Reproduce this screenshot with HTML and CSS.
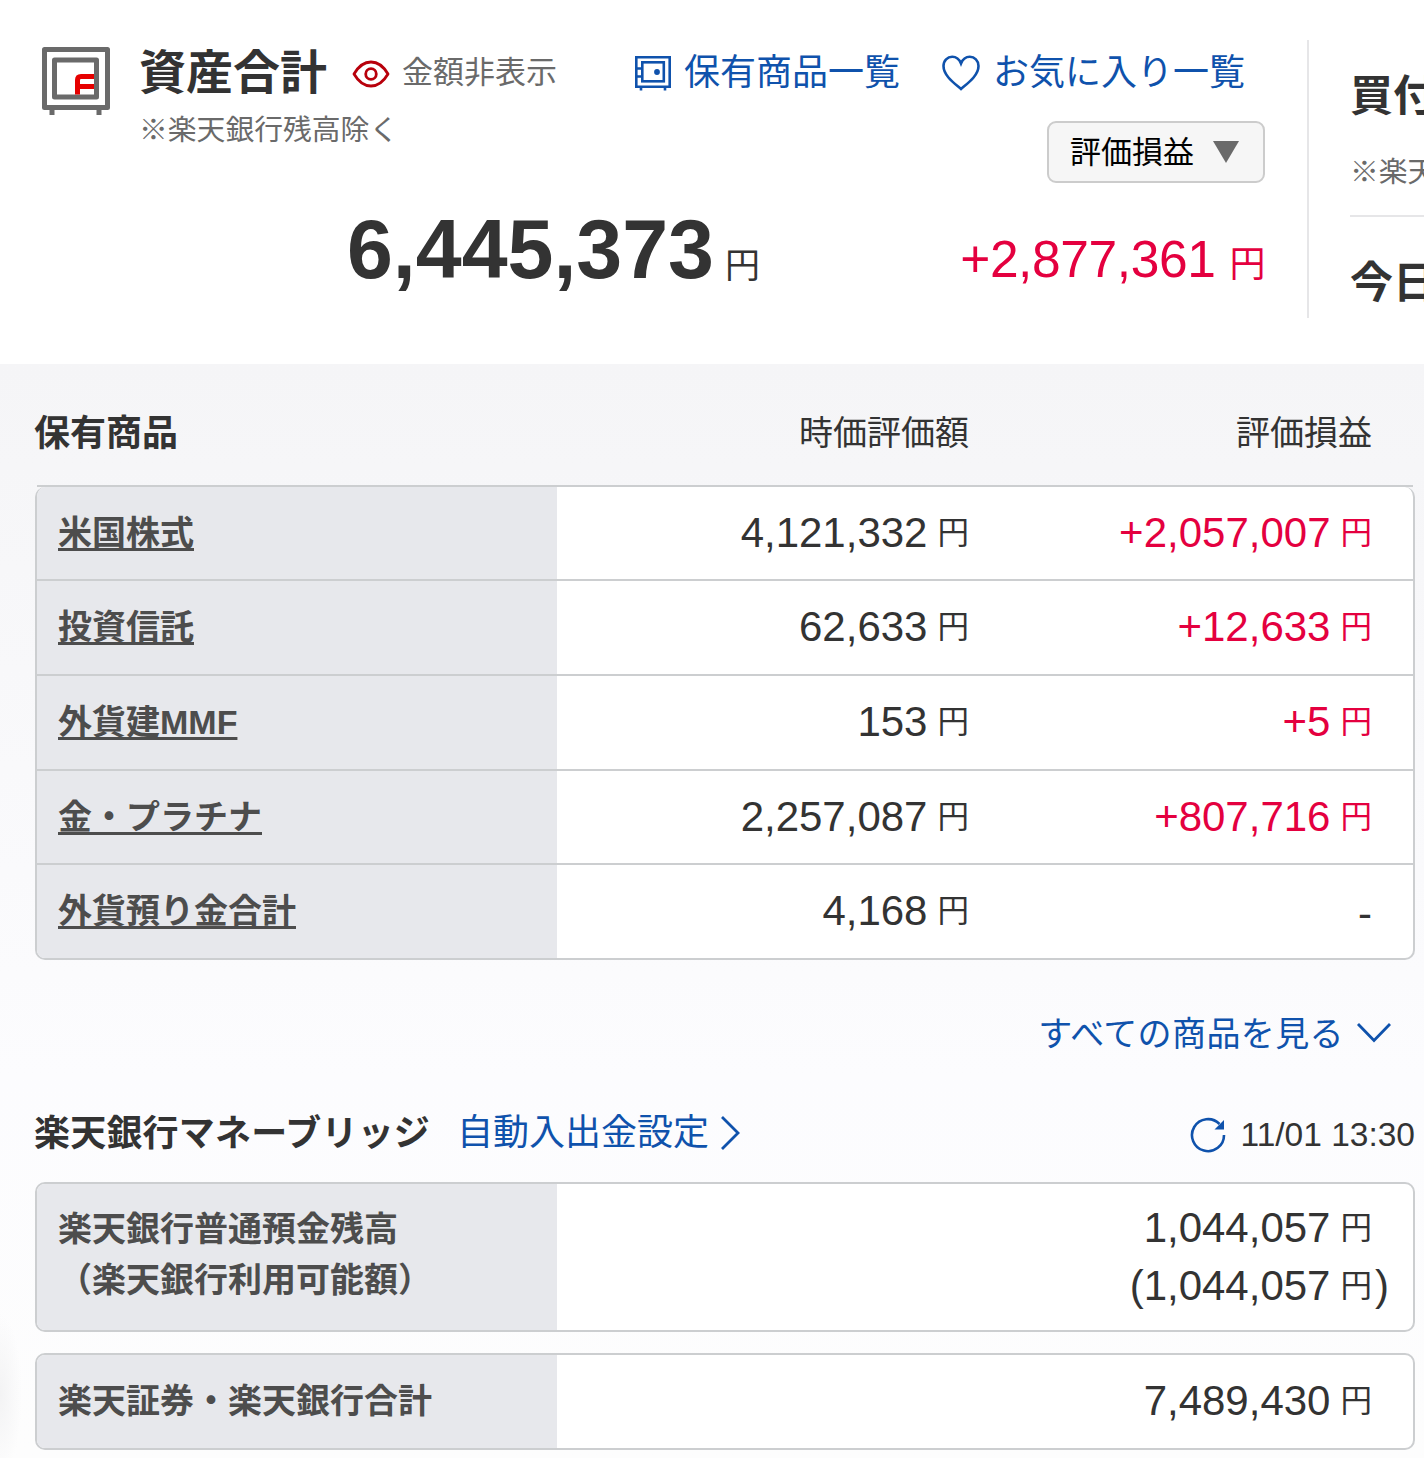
FILE: index.html
```html
<!DOCTYPE html>
<html lang="ja">
<head>
    <meta charset="UTF-8">
    <meta name="viewport" content="width=device-width, initial-scale=1.0">
    <title>資産合計</title>
    <link rel="stylesheet" href="styles.css">
</head>
<body>
    <header class="summary">
        <svg class="safe-icon" width="68" height="68" viewBox="0 0 68 68">
            <rect x="2.5" y="2.5" width="63" height="58" fill="none" stroke="#6a6a6a" stroke-width="5" stroke-linejoin="round"/>
            <rect x="12.5" y="13" width="42" height="37" fill="none" stroke="#6a6a6a" stroke-width="5" stroke-linejoin="round"/>
            <path d="M10 62v6M57 62v6" stroke="#6a6a6a" stroke-width="5"/>
            <path d="M35.500 47.500V33Q35.500 29.500 39 29.500H52M35.500 39.500H52" fill="none" stroke="#e60000" stroke-width="5"/>
        </svg>
        <div class="total">
            <div class="title-row">
                <h1>資産合計</h1>
                <svg class="eye-icon" width="38" height="28" viewBox="0 0 38 28">
                    <path d="M2 14Q9 2 19 2T36 14Q29 26 19 26T2 14Z" fill="none" stroke="#b8000b" stroke-width="2.800" stroke-linejoin="round"/>
                    <circle cx="19" cy="14" r="5.300" fill="none" stroke="#b8000b" stroke-width="2.800"/>
                </svg>
                <span class="hide-amount">金額非表示</span>
            </div>
            <p class="note">※楽天銀行残高除く</p>
            <p class="total-amount">6,445,373<span class="yen">円</span></p>
        </div>
        <div class="profit">
            <nav class="links">
                <a>
                    <svg width="36" height="36" viewBox="0 0 36 36" fill="none" stroke="#0f52ac" stroke-width="2.600">
                        <path d="M1.300 2.300H34.700V31.700H1.300ZM6 31v4.500M30 31v4.500"/>
                        <rect x="7.300" y="7.300" width="21.500" height="19"/>
                        <path d="M2 13.500h5M2 21.500h5"/>
                        <circle cx="22" cy="17" r="1.600" fill="#0f52ac"/>
                    </svg>
                    <span>保有商品一覧</span>
                </a>
                <a>
                    <svg width="38" height="36" viewBox="0 0 38 36" fill="none" stroke="#0f52ac" stroke-width="2.600">
                        <path d="M19 34C12 28 1.500 20.500 1.500 11C1.500 5.500 5.500 1.800 10.200 1.800C14.200 1.800 17.500 4.800 19 8.500C20.500 4.800 23.800 1.800 27.800 1.800C32.500 1.800 36.500 5.500 36.500 11C36.500 20.500 26 28 19 34Z"/>
                    </svg>
                    <span>お気に入り一覧</span>
                </a>
            </nav>
            <button class="select">評価損益<span class="arrow"></span></button>
            <p class="profit-amount">+2,877,361<span class="yen">円</span></p>
        </div>
        <aside class="side">
            <h2>買付</h2>
            <p>※楽天</p>
            <h2 class="today">今日</h2>
        </aside>
    </header>

    <main class="content">
        <div class="row head">
            <h2>保有商品</h2>
            <span class="value">時価評価額</span>
            <span class="value">評価損益</span>
        </div>
        <div class="table">
            <div class="row">
                <a class="label">米国株式</a>
                <span class="value">4,121,332<span class="yen">円</span></span>
                <span class="value plus">+2,057,007<span class="yen">円</span></span>
            </div>
            <div class="row tall">
                <a class="label">投資信託</a>
                <span class="value">62,633<span class="yen">円</span></span>
                <span class="value plus">+12,633<span class="yen">円</span></span>
            </div>
            <div class="row tall">
                <a class="label">外貨建MMF</a>
                <span class="value">153<span class="yen">円</span></span>
                <span class="value plus">+5<span class="yen">円</span></span>
            </div>
            <div class="row">
                <a class="label">金・プラチナ</a>
                <span class="value">2,257,087<span class="yen">円</span></span>
                <span class="value plus">+807,716<span class="yen">円</span></span>
            </div>
            <div class="row">
                <a class="label">外貨預り金合計</a>
                <span class="value">4,168<span class="yen">円</span></span>
                <span class="value none">-</span>
            </div>
        </div>

        <a class="show-all">
            <span>すべての商品を見る</span>
            <svg width="36" height="22" viewBox="0 0 36 22">
                <path d="M2 2L18 18.500L34 2" fill="none" stroke="#0f52ac" stroke-width="2.800"/>
            </svg>
        </a>

        <div class="bridge-head">
            <h2>楽天銀行マネーブリッジ</h2>
            <a class="setting">自動入出金設定</a>
            <svg class="next" width="22" height="36" viewBox="0 0 22 36">
                <path d="M3 2L19 18L3 34" fill="none" stroke="#0f52ac" stroke-width="2.800"/>
            </svg>
            <svg class="reload" width="36" height="36" viewBox="0 0 36 36">
                <path d="M34 18A16 16 0 1 1 29.500 7" fill="none" stroke="#0f52ac" stroke-width="2.600"/>
                <path d="M34 3V12.500H24.500Z" fill="#0f52ac"/>
            </svg>
            <span class="time">11/01 13:30</span>
        </div>

        <div class="table bank">
            <div class="bank-label">楽天銀行普通預金残高<br>（楽天銀行利用可能額）</div>
            <div class="bank-value">
                <div>1,044,057<span class="yen">円</span></div>
                <div class="usable">(1,044,057<span class="yen">円</span>)</div>
            </div>
        </div>
        <div class="table bank sum">
            <div class="bank-label">楽天証券・楽天銀行合計</div>
            <div class="bank-value">
                <div>7,489,430<span class="yen">円</span></div>
            </div>
        </div>
    </main>
</body>
</html>
```

FILE: styles.css
```css
*{
    box-sizing: border-box;
}
body{
    margin: 0;
    width: 1424px;
    height: 1458px;
    overflow: hidden;
    font-family: "Liberation Sans","Noto Sans CJK JP",sans-serif;
    color: #333;
    background-color: #fff;
}
h1,h2,p{
    margin: 0;
}
svg{
    display: block;
    flex: none;
}
.yen{
    font-weight: normal;
}

/* summary */
.summary{
    display: flex;
    height: 364px;
    padding: 40px 0 46px 42px;
}
.safe-icon{
    margin-top: 7px;
}
.total{
    flex: none;
    width: 492px;
    margin-left: 29px;
    white-space: nowrap;
}
.title-row{
    display: flex;
    align-items: center;
    height: 66px;
}
h1{
    font-size: 47px;
    line-height: 66px;
}
.eye-icon{
    margin: 2px 0 0 25px;
}
.hide-amount{
    margin-left: 12px;
    padding-bottom: 8px;
    font-size: 31px;
    color: #6a6a6a;
}
.note{
    padding-top: 2px;
    font-size: 28.8px;
    line-height: 44px;
    color: #6a6a6a;
}
.total-amount{
    width: 621px;
    margin-top: 42px;
    text-align: right;
    font-size: 82.5px;
    font-weight: bold;
    line-height: 110px;
}
.total-amount .yen{
    margin-left: 11px;
    font-size: 35px;
}
.profit{
    display: flex;
    flex: none;
    flex-direction: column;
    align-items: flex-end;
    width: 678px;
    padding-right: 42px;
    border-right: 2px solid #e6e6e8;
}
.links{
    display: flex;
    gap: 42px;
    height: 66px;
    margin-right: 20px;
}
.links a{
    display: flex;
    align-items: center;
    gap: 13px;
    font-size: 36px;
    line-height: 66px;
    color: #0f52ac;
    white-space: nowrap;
}
.select{
    display: flex;
    align-items: center;
    justify-content: space-between;
    width: 218px;
    height: 62px;
    margin-top: 15px;
    padding: 0 24px 6px 21px;
    border: 2px solid #ccc;
    border-radius: 9px;
    background-color: #f6f6f6;
    font-family: inherit;
    font-size: 31px;
    color: #000;
}
.arrow{
    margin-top: 6px;
    border: 13px solid transparent;
    border-top: 22px solid #6a6a6a;
    border-bottom: 0;
}
.profit-amount{
    margin-top: 41px;
    font-size: 51.5px;
    letter-spacing: -0.4px;
    line-height: 70px;
    color: #e4003f;
    white-space: nowrap;
}
.profit-amount .yen{
    margin-left: 14px;
    font-size: 36px;
}
.side{
    flex: 1;
    min-width: 0;
    margin-left: 41px;
    overflow: hidden;
    white-space: nowrap;
}
.side h2{
    margin-top: 25px;
    font-size: 43px;
    line-height: 62px;
}
.side p{
    height: 90px;
    padding-top: 24px;
    border-bottom: 2px solid #e6e6e8;
    font-size: 28.8px;
    line-height: 42px;
    color: #6a6a6a;
}
.side .today{
    margin-top: 35px;
}

/* content */
.content{
    height: 1094px;
    padding: 0 9px 0 35px;
    background: radial-gradient(ellipse 22px 80px at 0 1030px,#f3f3f4,transparent),
                linear-gradient(#f5f5f7,#fcfcfe 65%,#fdfdfd);
}
.content h2{
    font-size: 36px;
    white-space: nowrap;
}
.row{
    display: grid;
    grid-template-columns: 520px 412px 403px;
    grid-template-rows: 100%;
    height: 94px;
    border-bottom: 2px solid #ccced0;
    font-size: 42px;
    line-height: 92px;
}
.tall{
    height: 95px;
}
.row:last-child{
    height: 95px;
    border-bottom: 0;
}
.head{
    height: 123px;
    margin: 0 2px;
    font-size: 34px;
    line-height: 139px;
}
.head h2{
    margin-left: -3px;
}
.table{
    overflow: hidden;
    border: 2px solid #ccced0;
    border-radius: 10px;
    background-color: #fff;
}
.head + .table{
    height: 473px;
    border-top: 0;
}
.label,.bank-label{
    padding-left: 21px;
    background-color: #e7e8ec;
    font-size: 34px;
    font-weight: bold;
    color: #4d4d4d;
}
.label{
    text-decoration: underline;
    text-decoration-thickness: 3px;
    text-underline-offset: 3px;
    text-decoration-skip-ink: none;
}
.value{
    text-align: right;
    white-space: nowrap;
}
.none{
    line-height: 98px;
}
.table .yen{
    margin-left: 10px;
    font-size: 31.5px;
    vertical-align: 3px;
}
.plus{
    color: #e4003f;
}
.show-all{
    display: flex;
    align-items: center;
    justify-content: flex-end;
    gap: 12px;
    height: 50px;
    margin: 48px 23px 0 0;
    font-size: 34px;
    letter-spacing: 0.4px;
    color: #0f52ac;
}
.show-all span{
    padding-bottom: 4px;
}
.bridge-head{
    display: flex;
    align-items: center;
    height: 60px;
    margin-top: 44px;
}
.bridge-head h2{
    margin-left: -1px;
    padding-bottom: 4px;
    letter-spacing: 0.2px;
}
.setting{
    margin: 0 10px 0 27px;
    padding-bottom: 6px;
    font-size: 36px;
    color: #0f52ac;
}
.next{
    margin-top: 2px;
}
.reload{
    margin: 5px 0 0 auto;
}
.time{
    margin-left: 15px;
    padding-top: 6px;
    font-size: 33.5px;
}
.bank{
    display: flex;
    height: 150px;
    margin-top: 20px;
}
.bank-label{
    width: 520px;
    padding-top: 20px;
    line-height: 51px;
}
.bank-value{
    flex: 1;
    padding: 15px 41px 0 0;
    text-align: right;
    font-size: 42px;
    line-height: 58px;
}
.usable{
    margin-right: -17px;
}
.usable .yen{
    margin-right: 3px;
}
.sum{
    height: 97px;
    margin-top: 21px;
}
.sum .bank-label{
    padding-top: 21px;
}
.sum .bank-value{
    padding-top: 17px;
}
```
